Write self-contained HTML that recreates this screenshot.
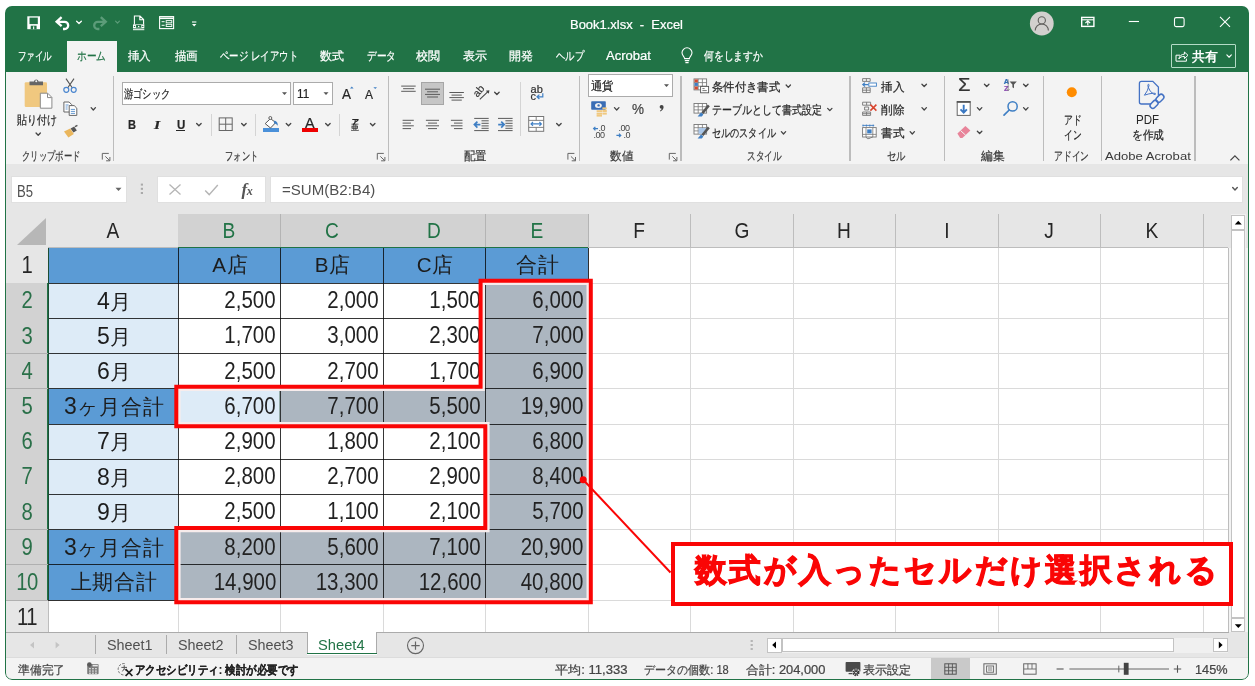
<!DOCTYPE html>
<html lang="ja">
<head>
<meta charset="utf-8">
<title>Book1.xlsx - Excel</title>
<style>
html,body{margin:0;padding:0;background:#fff}
body{width:1255px;height:686px;overflow:hidden;position:relative;font-family:"Liberation Sans",sans-serif}
#win{position:absolute;left:0;top:0;width:1255px;height:686px;clip-path:inset(6px 6px 6px 5px round 7px);background:#f3f3f3;will-change:transform}
#frame{position:absolute;left:5px;top:6px;width:1244px;height:674px;box-sizing:border-box;border:1px solid #217346;border-radius:7px;pointer-events:none}
.t{position:absolute;white-space:nowrap;margin:0;padding:0}
.r{position:absolute}
.ui .t{-webkit-text-stroke:0.22px currentColor}
svg.ov{position:absolute;left:0;top:0;width:1255px;height:686px;overflow:visible}
</style>
</head>
<body>
<div id="win">
<!-- chrome -->
<div class="ui">
<div class="r" style="left:5px;top:6px;width:1244px;height:66px;background:#217346;"></div>
<div class="r" style="left:67px;top:41px;width:50px;height:31px;background:#f3f3f3;"></div>
<div class="t" id="f1" style="top:19px;font-size:12.5px;line-height:12.5px;color:#fff;left:570px;transform:scaleX(1.036);transform-origin:0 0;">Book1.xlsx&nbsp; -&nbsp; Excel</div>
<div class="t" id="f2" style="top:50px;font-size:12px;line-height:12px;color:#fff;left:18px;transform:scaleX(0.7083);transform-origin:0 0;">ファイル</div>
<div class="t" id="f3" style="top:50px;font-size:12px;line-height:12px;color:#fff;left:128px;transform:scaleX(0.9583);transform-origin:0 0;">挿入</div>
<div class="t" id="f4" style="top:50px;font-size:12px;line-height:12px;color:#fff;left:175px;transform:scaleX(0.9583);transform-origin:0 0;">描画</div>
<div class="t" id="f5" style="top:50px;font-size:12px;line-height:12px;color:#fff;left:220px;transform:scaleX(0.7852);transform-origin:0 0;">ページ レイアウト</div>
<div class="t" id="f6" style="top:50px;font-size:12px;line-height:12px;color:#fff;left:320px;transform:scaleX(1.0);transform-origin:0 0;">数式</div>
<div class="t" id="f7" style="top:50px;font-size:12px;line-height:12px;color:#fff;left:367px;transform:scaleX(0.8056);transform-origin:0 0;">データ</div>
<div class="t" id="f8" style="top:50px;font-size:12px;line-height:12px;color:#fff;left:416px;transform:scaleX(1.0);transform-origin:0 0;">校閲</div>
<div class="t" id="f9" style="top:50px;font-size:12px;line-height:12px;color:#fff;left:463px;transform:scaleX(1.0);transform-origin:0 0;">表示</div>
<div class="t" id="f10" style="top:50px;font-size:12px;line-height:12px;color:#fff;left:509px;transform:scaleX(1.0);transform-origin:0 0;">開発</div>
<div class="t" id="f11" style="top:50px;font-size:12px;line-height:12px;color:#fff;left:556px;transform:scaleX(0.7778);transform-origin:0 0;">ヘルプ</div>
<div class="t" id="f12" style="top:50px;font-size:12px;line-height:12px;color:#fff;left:606px;transform:scaleX(1.088);transform-origin:0 0;">Acrobat</div>
<div class="t" id="f13" style="top:50px;font-size:12px;line-height:12px;color:#fff;left:704px;transform:scaleX(0.8194);transform-origin:0 0;">何をしますか</div>
<div class="t" id="f14" style="top:50px;font-size:12px;line-height:12px;color:#217346;left:77px;transform:scaleX(0.8056);transform-origin:0 0;">ホーム</div>
<div class="r" style="left:1171.2px;top:44.4px;width:64.6px;height:23.8px;border:1.2px solid #b4dbc6;box-sizing:border-box;border-radius:1px"></div>
<div class="t" id="f15" style="top:50.4px;font-size:13px;line-height:13px;color:#fff;left:1192px;transform:scaleX(0.9923);transform-origin:0 0;font-weight:bold;-webkit-text-stroke:0;">共有</div>
</div>
<!-- ribbon -->
<div class="ui">
<div class="r" style="left:5px;top:71.5px;width:1244px;height:92.5px;background:#f3f3f3;"></div>
<div class="r" style="left:5px;top:163.5px;width:1244px;height:1px;background:#d8d8d8;"></div>
<div class="r" style="left:112.9px;top:76px;width:1.2px;height:84.5px;background:#bcbcbc;"></div>
<div class="r" style="left:388.2px;top:76px;width:1.2px;height:84.5px;background:#bcbcbc;"></div>
<div class="r" style="left:578.6px;top:76px;width:1.2px;height:84.5px;background:#bcbcbc;"></div>
<div class="r" style="left:680.4px;top:76px;width:1.2px;height:84.5px;background:#bcbcbc;"></div>
<div class="r" style="left:849.4px;top:76px;width:1.2px;height:84.5px;background:#bcbcbc;"></div>
<div class="r" style="left:944.1px;top:76px;width:1.2px;height:84.5px;background:#bcbcbc;"></div>
<div class="r" style="left:1043.0px;top:76px;width:1.2px;height:84.5px;background:#bcbcbc;"></div>
<div class="r" style="left:1100.8000000000002px;top:76px;width:1.2px;height:84.5px;background:#bcbcbc;"></div>
<div class="r" style="left:1194.4px;top:76px;width:1.2px;height:84.5px;background:#bcbcbc;"></div>
<div class="r" style="left:210.7px;top:114px;width:1px;height:21.5px;background:#d4d4d4;"></div>
<div class="r" style="left:255.3px;top:114px;width:1px;height:21.5px;background:#d4d4d4;"></div>
<div class="r" style="left:339.3px;top:114px;width:1px;height:21.5px;background:#d4d4d4;"></div>
<div class="r" style="left:520.1px;top:81.5px;width:1px;height:54px;background:#d4d4d4;"></div>
<div class="t" id="f16" style="top:150.6px;font-size:11.5px;line-height:11.5px;color:#3a3a3a;left:21.5px;transform:scaleX(0.6929);transform-origin:0 0;">クリップボード</div>
<div class="t" id="f17" style="top:150.6px;font-size:11.5px;line-height:11.5px;color:#3a3a3a;left:225.4px;transform:scaleX(0.6875);transform-origin:0 0;">フォント</div>
<div class="t" id="f18" style="top:150.6px;font-size:11.5px;line-height:11.5px;color:#3a3a3a;left:463.7px;transform:scaleX(0.95);transform-origin:0 0;">配置</div>
<div class="t" id="f19" style="top:150.6px;font-size:11.5px;line-height:11.5px;color:#3a3a3a;left:609.8px;transform:scaleX(0.9667);transform-origin:0 0;">数値</div>
<div class="t" id="f20" style="top:150.6px;font-size:11.5px;line-height:11.5px;color:#3a3a3a;left:747px;transform:scaleX(0.7188);transform-origin:0 0;">スタイル</div>
<div class="t" id="f21" style="top:150.6px;font-size:11.5px;line-height:11.5px;color:#3a3a3a;left:886.7px;transform:scaleX(0.775);transform-origin:0 0;">セル</div>
<div class="t" id="f22" style="top:150.6px;font-size:11.5px;line-height:11.5px;color:#3a3a3a;left:981px;transform:scaleX(0.9792);transform-origin:0 0;">編集</div>
<div class="t" id="f23" style="top:150.6px;font-size:11.5px;line-height:11.5px;color:#3a3a3a;left:1054px;transform:scaleX(0.7292);transform-origin:0 0;">アドイン</div>
<div class="t" id="f24" style="top:150.6px;font-size:11.5px;line-height:11.5px;color:#3a3a3a;left:1104.7px;transform:scaleX(1.1371);transform-origin:0 0;-webkit-text-stroke:0;">Adobe Acrobat</div>
<div class="t" id="f25" style="top:113.5px;font-size:12px;line-height:12px;color:#262626;left:16.7px;transform:scaleX(0.8333);transform-origin:0 0;">貼り付け</div>
<div class="r" style="left:122px;top:82.3px;width:169.2px;height:22.8px;background:#fff;box-sizing:border-box;border:1px solid #ababab;"></div>
<div class="r" style="left:293.3px;top:82.3px;width:39.8px;height:22.8px;background:#fff;box-sizing:border-box;border:1px solid #ababab;"></div>
<div class="t" id="f26" style="top:88px;font-size:12px;line-height:12px;color:#262626;left:124.3px;transform:scaleX(0.77);transform-origin:0 0;">游ゴシック</div>
<div class="t" id="f27" style="top:88px;font-size:12.5px;line-height:12.5px;color:#262626;left:296.5px;transform:scaleX(0.9396);transform-origin:0 0;">11</div>
<div class="t" id="f28" style="top:118px;font-size:13.5px;line-height:13.5px;color:#262626;left:128.3px;transform:scaleX(0.8205);transform-origin:0 0;font-weight:bold;">B</div>
<div class="t" id="f29" style="top:118px;font-size:13.5px;line-height:13.5px;color:#262626;left:153.8px;transform:scaleX(1.1774);transform-origin:0 0;font-weight:bold;font-style:italic;font-family:'Liberation Serif',serif;">I</div>
<div class="t" id="f30" style="top:118px;font-size:13.5px;line-height:13.5px;color:#262626;left:176.6px;transform:scaleX(0.8513);transform-origin:0 0;font-weight:bold;">U</div>
<div class="r" style="left:176.4px;top:130px;width:8.8px;height:1.1px;background:#262626;"></div>
<div class="t" id="f31" style="top:86px;font-size:15px;line-height:15px;color:#262626;left:342px;transform:scaleX(0.8986);transform-origin:0 0;">A</div>
<div class="t" id="f32" style="top:87.5px;font-size:13px;line-height:13px;color:#262626;left:365.3px;transform:scaleX(0.9225);transform-origin:0 0;">A</div>
<div class="t" id="f33" style="top:115.5px;font-size:14.5px;line-height:14.5px;color:#262626;left:305px;transform:scaleX(0.9926);transform-origin:0 0;">A</div>
<div class="r" style="left:302.1px;top:128.3px;width:15.9px;height:4.2px;background:#ee0000;"></div>
<div class="r" style="left:263.1px;top:128.3px;width:15.9px;height:4px;background:#4a90d9;"></div>
<div class="t" style="top:117.5px;font-size:7px;line-height:7px;color:#262626;left:351.5px;font-weight:bold;">ア</div>
<div class="t" style="top:124px;font-size:8px;line-height:8px;color:#262626;left:350.8px;">亜</div>
<div class="r" style="left:421.1px;top:82px;width:22.9px;height:23px;background:#c6c6c6;box-sizing:border-box;border:1px solid #a6a6a6;"></div>
<div class="t" style="top:84.4px;font-size:11px;line-height:11px;color:#333;left:530.4px;letter-spacing:0.2px;">ab</div>
<div class="t" style="top:91.4px;font-size:11px;line-height:11px;color:#333;left:530.6px;">c</div>
<div class="r" style="left:588px;top:74.4px;width:85.3px;height:22.4px;background:#fff;box-sizing:border-box;border:1px solid #ababab;"></div>
<div class="t" id="f34" style="top:80px;font-size:12px;line-height:12px;color:#262626;left:590.7px;transform:scaleX(0.9417);transform-origin:0 0;">通貨</div>
<div class="t" id="f35" style="top:101.5px;font-size:14.5px;line-height:14.5px;color:#444;left:632px;transform:scaleX(0.9298);transform-origin:0 0;">%</div>
<div class="t" style="top:124.1px;font-size:9px;line-height:9px;color:#444;left:598.6px;letter-spacing:-0.5px;-webkit-text-stroke:0;">.0</div>
<div class="t" style="top:131.4px;font-size:9px;line-height:9px;color:#444;left:593.6px;letter-spacing:-0.5px;-webkit-text-stroke:0;">.00</div>
<div class="t" style="top:124.1px;font-size:9px;line-height:9px;color:#444;left:618.4px;letter-spacing:-0.5px;-webkit-text-stroke:0;">.00</div>
<div class="t" style="top:131.4px;font-size:9px;line-height:9px;color:#444;left:623.4px;letter-spacing:-0.5px;-webkit-text-stroke:0;">.0</div>
<div class="t" id="f36" style="top:80.5px;font-size:12px;line-height:12px;color:#262626;left:711.8px;transform:scaleX(0.9472);transform-origin:0 0;">条件付き書式</div>
<div class="t" id="f37" style="top:103.8px;font-size:12px;line-height:12px;color:#262626;left:711.8px;transform:scaleX(0.8303);transform-origin:0 0;">テーブルとして書式設定</div>
<div class="t" id="f38" style="top:127px;font-size:12px;line-height:12px;color:#262626;left:711.8px;transform:scaleX(0.7595);transform-origin:0 0;">セルのスタイル</div>
<div class="t" id="f39" style="top:80.5px;font-size:12px;line-height:12px;color:#262626;left:881px;transform:scaleX(0.9667);transform-origin:0 0;">挿入</div>
<div class="t" id="f40" style="top:103.8px;font-size:12px;line-height:12px;color:#262626;left:881px;transform:scaleX(0.9667);transform-origin:0 0;">削除</div>
<div class="t" id="f41" style="top:127px;font-size:12px;line-height:12px;color:#262626;left:881px;transform:scaleX(0.9667);transform-origin:0 0;">書式</div>
<div class="t" id="f42" style="top:76px;font-size:18px;line-height:18px;color:#333;left:957.5px;transform:scaleX(1.122);transform-origin:0 0;">Σ</div>
<div class="t" style="top:78px;font-size:7.5px;line-height:7.5px;color:#2f6fb6;left:1003.7px;font-weight:bold;">A</div>
<div class="t" style="top:84.6px;font-size:7.5px;line-height:7.5px;color:#8a4bb0;left:1003.9px;font-weight:bold;">Z</div>
<div class="t" id="f43" style="top:113.8px;font-size:12px;line-height:12px;color:#262626;left:1064.3px;transform:scaleX(0.7292);transform-origin:0 0;">アド</div>
<div class="t" id="f44" style="top:128.8px;font-size:12px;line-height:12px;color:#262626;left:1064.3px;transform:scaleX(0.7292);transform-origin:0 0;">イン</div>
<div class="t" id="f45" style="top:113.5px;font-size:12px;line-height:12px;color:#262626;left:1136.3px;transform:scaleX(0.9625);transform-origin:0 0;-webkit-text-stroke:0;">PDF</div>
<div class="t" id="f46" style="top:128.8px;font-size:12px;line-height:12px;color:#262626;left:1132px;transform:scaleX(0.8944);transform-origin:0 0;">を作成</div>
</div>
<!-- formula -->
<div class="sheet">
<div class="r" style="left:5px;top:164px;width:1244px;height:84px;background:#e6e6e6;"></div>
<div class="r" style="left:11px;top:176px;width:116px;height:27px;background:#fff;box-sizing:border-box;border:1px solid #e0e0e0;"></div>
<div class="t" id="f47" style="top:183.6px;font-size:16px;line-height:16px;color:#505050;left:17.2px;transform:scaleX(0.8172);transform-origin:0 0;">B5</div>
<div class="r" style="left:157.4px;top:176px;width:108.6px;height:27px;background:#fff;box-sizing:border-box;border:1px solid #e0e0e0;"></div>
<div class="r" style="left:269.7px;top:176px;width:973.3px;height:27px;background:#fff;box-sizing:border-box;border:1px solid #e0e0e0;"></div>
<div class="t" id="f48" style="top:182.2px;font-size:15px;line-height:15px;color:#505050;left:281.7px;transform:scaleX(1.0037);transform-origin:0 0;">=SUM(B2:B4)</div>
<div class="t" style="top:180.5px;font-size:17px;line-height:17px;color:#555;left:241.5px;font-family:'Liberation Serif',serif;font-style:italic;font-weight:bold;">f<span style="font-size:12px;margin-left:-0.5px">x</span></div>
</div>
<!-- grid -->
<div class="sheet">
<div class="r" style="left:5px;top:213px;width:1244px;height:35px;background:#e6e6e6;"></div>
<div class="r" style="left:5px;top:248px;width:43px;height:384px;background:#e6e6e6;"></div>
<div class="r" style="left:48px;top:248px;width:1180px;height:384px;background:#fff;"></div>
<div class="r" style="left:177.5px;top:214px;width:1px;height:34px;background:#bdbdbd;"></div>
<div class="t" style="top:219.5px;font-size:22px;line-height:22px;color:#262626;left:113.0px;transform:translateX(-50%);transform:translateX(-50%) scaleX(.87);">A</div>
<div class="r" style="left:178px;top:214px;width:102.5px;height:34px;background:#d2d2d2;"></div>
<div class="r" style="left:178px;top:246.5px;width:102.5px;height:1.5px;background:#217346;"></div>
<div class="r" style="left:280.0px;top:214px;width:1px;height:34px;background:#b4b4b4;"></div>
<div class="t" style="top:219.5px;font-size:22px;line-height:22px;color:#217346;left:229.25px;transform:translateX(-50%);transform:translateX(-50%) scaleX(.87);">B</div>
<div class="r" style="left:280.5px;top:214px;width:102.5px;height:34px;background:#d2d2d2;"></div>
<div class="r" style="left:280.5px;top:246.5px;width:102.5px;height:1.5px;background:#217346;"></div>
<div class="r" style="left:382.5px;top:214px;width:1px;height:34px;background:#b4b4b4;"></div>
<div class="t" style="top:219.5px;font-size:22px;line-height:22px;color:#217346;left:331.75px;transform:translateX(-50%);transform:translateX(-50%) scaleX(.87);">C</div>
<div class="r" style="left:383px;top:214px;width:102.5px;height:34px;background:#d2d2d2;"></div>
<div class="r" style="left:383px;top:246.5px;width:102.5px;height:1.5px;background:#217346;"></div>
<div class="r" style="left:485.0px;top:214px;width:1px;height:34px;background:#b4b4b4;"></div>
<div class="t" style="top:219.5px;font-size:22px;line-height:22px;color:#217346;left:434.25px;transform:translateX(-50%);transform:translateX(-50%) scaleX(.87);">D</div>
<div class="r" style="left:485.5px;top:214px;width:102.5px;height:34px;background:#d2d2d2;"></div>
<div class="r" style="left:485.5px;top:246.5px;width:102.5px;height:1.5px;background:#217346;"></div>
<div class="r" style="left:587.5px;top:214px;width:1px;height:34px;background:#b4b4b4;"></div>
<div class="t" style="top:219.5px;font-size:22px;line-height:22px;color:#217346;left:536.75px;transform:translateX(-50%);transform:translateX(-50%) scaleX(.87);">E</div>
<div class="r" style="left:690.0px;top:214px;width:1px;height:34px;background:#bdbdbd;"></div>
<div class="t" style="top:219.5px;font-size:22px;line-height:22px;color:#262626;left:639.25px;transform:translateX(-50%);transform:translateX(-50%) scaleX(.87);">F</div>
<div class="r" style="left:792.5px;top:214px;width:1px;height:34px;background:#bdbdbd;"></div>
<div class="t" style="top:219.5px;font-size:22px;line-height:22px;color:#262626;left:741.75px;transform:translateX(-50%);transform:translateX(-50%) scaleX(.87);">G</div>
<div class="r" style="left:895.0px;top:214px;width:1px;height:34px;background:#bdbdbd;"></div>
<div class="t" style="top:219.5px;font-size:22px;line-height:22px;color:#262626;left:844.25px;transform:translateX(-50%);transform:translateX(-50%) scaleX(.87);">H</div>
<div class="r" style="left:997.5px;top:214px;width:1px;height:34px;background:#bdbdbd;"></div>
<div class="t" style="top:219.5px;font-size:22px;line-height:22px;color:#262626;left:946.75px;transform:translateX(-50%);transform:translateX(-50%) scaleX(.87);">I</div>
<div class="r" style="left:1100.0px;top:214px;width:1px;height:34px;background:#bdbdbd;"></div>
<div class="t" style="top:219.5px;font-size:22px;line-height:22px;color:#262626;left:1049.25px;transform:translateX(-50%);transform:translateX(-50%) scaleX(.87);">J</div>
<div class="r" style="left:1202.5px;top:214px;width:1px;height:34px;background:#bdbdbd;"></div>
<div class="t" style="top:219.5px;font-size:22px;line-height:22px;color:#262626;left:1151.75px;transform:translateX(-50%);transform:translateX(-50%) scaleX(.87);">K</div>
<div class="r" style="left:48px;top:247px;width:1180px;height:1px;background:#bdbdbd;"></div>
<div class="r" style="left:178px;top:246.5px;width:102.5px;height:1.5px;background:#217346;"></div>
<div class="r" style="left:280.5px;top:246.5px;width:102.5px;height:1.5px;background:#217346;"></div>
<div class="r" style="left:383px;top:246.5px;width:102.5px;height:1.5px;background:#217346;"></div>
<div class="r" style="left:485.5px;top:246.5px;width:102.5px;height:1.5px;background:#217346;"></div>
<div class="r" style="left:6px;top:283px;width:42px;height:1px;background:#bdbdbd;"></div>
<div class="t" style="top:254.2px;font-size:23px;line-height:23px;color:#262626;left:27.2px;transform:translateX(-50%);letter-spacing:-0.5px;transform:translateX(-50%) scaleX(.88);">1</div>
<div class="r" style="left:6px;top:283.2px;width:42px;height:35.19999999999999px;background:#d2d2d2;"></div>
<div class="r" style="left:46.5px;top:283.2px;width:1.5px;height:35.19999999999999px;background:#217346;"></div>
<div class="r" style="left:6px;top:318px;width:42px;height:1px;background:#b0b0b0;"></div>
<div class="t" style="top:289.4px;font-size:23px;line-height:23px;color:#2a7049;left:27.2px;transform:translateX(-50%);letter-spacing:-0.5px;transform:translateX(-50%) scaleX(.88);">2</div>
<div class="r" style="left:6px;top:318.4px;width:42px;height:35.200000000000045px;background:#d2d2d2;"></div>
<div class="r" style="left:46.5px;top:318.4px;width:1.5px;height:35.200000000000045px;background:#217346;"></div>
<div class="r" style="left:6px;top:353px;width:42px;height:1px;background:#b0b0b0;"></div>
<div class="t" style="top:324.6px;font-size:23px;line-height:23px;color:#2a7049;left:27.2px;transform:translateX(-50%);letter-spacing:-0.5px;transform:translateX(-50%) scaleX(.88);">3</div>
<div class="r" style="left:6px;top:353.6px;width:42px;height:35.19999999999999px;background:#d2d2d2;"></div>
<div class="r" style="left:46.5px;top:353.6px;width:1.5px;height:35.19999999999999px;background:#217346;"></div>
<div class="r" style="left:6px;top:388px;width:42px;height:1px;background:#b0b0b0;"></div>
<div class="t" style="top:359.8px;font-size:23px;line-height:23px;color:#2a7049;left:27.2px;transform:translateX(-50%);letter-spacing:-0.5px;transform:translateX(-50%) scaleX(.88);">4</div>
<div class="r" style="left:6px;top:388.8px;width:42px;height:35.19999999999999px;background:#d2d2d2;"></div>
<div class="r" style="left:46.5px;top:388.8px;width:1.5px;height:35.19999999999999px;background:#217346;"></div>
<div class="r" style="left:6px;top:424px;width:42px;height:1px;background:#b0b0b0;"></div>
<div class="t" style="top:395.0px;font-size:23px;line-height:23px;color:#2a7049;left:27.2px;transform:translateX(-50%);letter-spacing:-0.5px;transform:translateX(-50%) scaleX(.88);">5</div>
<div class="r" style="left:6px;top:424.0px;width:42px;height:35.19999999999999px;background:#d2d2d2;"></div>
<div class="r" style="left:46.5px;top:424.0px;width:1.5px;height:35.19999999999999px;background:#217346;"></div>
<div class="r" style="left:6px;top:459px;width:42px;height:1px;background:#b0b0b0;"></div>
<div class="t" style="top:430.2px;font-size:23px;line-height:23px;color:#2a7049;left:27.2px;transform:translateX(-50%);letter-spacing:-0.5px;transform:translateX(-50%) scaleX(.88);">6</div>
<div class="r" style="left:6px;top:459.2px;width:42px;height:35.19999999999999px;background:#d2d2d2;"></div>
<div class="r" style="left:46.5px;top:459.2px;width:1.5px;height:35.19999999999999px;background:#217346;"></div>
<div class="r" style="left:6px;top:494px;width:42px;height:1px;background:#b0b0b0;"></div>
<div class="t" style="top:465.4px;font-size:23px;line-height:23px;color:#2a7049;left:27.2px;transform:translateX(-50%);letter-spacing:-0.5px;transform:translateX(-50%) scaleX(.88);">7</div>
<div class="r" style="left:6px;top:494.4px;width:42px;height:35.200000000000045px;background:#d2d2d2;"></div>
<div class="r" style="left:46.5px;top:494.4px;width:1.5px;height:35.200000000000045px;background:#217346;"></div>
<div class="r" style="left:6px;top:529px;width:42px;height:1px;background:#b0b0b0;"></div>
<div class="t" style="top:500.6px;font-size:23px;line-height:23px;color:#2a7049;left:27.2px;transform:translateX(-50%);letter-spacing:-0.5px;transform:translateX(-50%) scaleX(.88);">8</div>
<div class="r" style="left:6px;top:529.6px;width:42px;height:35.19999999999993px;background:#d2d2d2;"></div>
<div class="r" style="left:46.5px;top:529.6px;width:1.5px;height:35.19999999999993px;background:#217346;"></div>
<div class="r" style="left:6px;top:564px;width:42px;height:1px;background:#b0b0b0;"></div>
<div class="t" style="top:535.8px;font-size:23px;line-height:23px;color:#2a7049;left:27.2px;transform:translateX(-50%);letter-spacing:-0.5px;transform:translateX(-50%) scaleX(.88);">9</div>
<div class="r" style="left:6px;top:564.8px;width:42px;height:35.200000000000045px;background:#d2d2d2;"></div>
<div class="r" style="left:46.5px;top:564.8px;width:1.5px;height:35.200000000000045px;background:#217346;"></div>
<div class="r" style="left:6px;top:600px;width:42px;height:1px;background:#b0b0b0;"></div>
<div class="t" style="top:571.0px;font-size:23px;line-height:23px;color:#2a7049;left:27.2px;transform:translateX(-50%);letter-spacing:-0.5px;transform:translateX(-50%) scaleX(.88);">10</div>
<div class="r" style="left:6px;top:632px;width:42px;height:1px;background:#bdbdbd;"></div>
<div class="t" style="top:606.2px;font-size:23px;line-height:23px;color:#262626;left:27.2px;transform:translateX(-50%);letter-spacing:-0.5px;transform:translateX(-50%) scaleX(.88);">11</div>
<div class="r" style="left:47.5px;top:248px;width:1px;height:35px;background:#bdbdbd;"></div>
<div class="r" style="left:47.5px;top:600.0px;width:1px;height:32px;background:#bdbdbd;"></div>
<div class="r" style="left:48px;top:282.7px;width:1180px;height:1px;background:#dadada;"></div>
<div class="r" style="left:48px;top:317.9px;width:1180px;height:1px;background:#dadada;"></div>
<div class="r" style="left:48px;top:353.1px;width:1180px;height:1px;background:#dadada;"></div>
<div class="r" style="left:48px;top:388.3px;width:1180px;height:1px;background:#dadada;"></div>
<div class="r" style="left:48px;top:423.5px;width:1180px;height:1px;background:#dadada;"></div>
<div class="r" style="left:48px;top:458.7px;width:1180px;height:1px;background:#dadada;"></div>
<div class="r" style="left:48px;top:493.9px;width:1180px;height:1px;background:#dadada;"></div>
<div class="r" style="left:48px;top:529.1px;width:1180px;height:1px;background:#dadada;"></div>
<div class="r" style="left:48px;top:564.3px;width:1180px;height:1px;background:#dadada;"></div>
<div class="r" style="left:48px;top:599.5px;width:1180px;height:1px;background:#dadada;"></div>
<div class="r" style="left:177.5px;top:248px;width:1px;height:384px;background:#dadada;"></div>
<div class="r" style="left:280.0px;top:248px;width:1px;height:384px;background:#dadada;"></div>
<div class="r" style="left:382.5px;top:248px;width:1px;height:384px;background:#dadada;"></div>
<div class="r" style="left:485.0px;top:248px;width:1px;height:384px;background:#dadada;"></div>
<div class="r" style="left:587.5px;top:248px;width:1px;height:384px;background:#dadada;"></div>
<div class="r" style="left:690.0px;top:248px;width:1px;height:384px;background:#dadada;"></div>
<div class="r" style="left:792.5px;top:248px;width:1px;height:384px;background:#dadada;"></div>
<div class="r" style="left:895.0px;top:248px;width:1px;height:384px;background:#dadada;"></div>
<div class="r" style="left:997.5px;top:248px;width:1px;height:384px;background:#dadada;"></div>
<div class="r" style="left:1100.0px;top:248px;width:1px;height:384px;background:#dadada;"></div>
<div class="r" style="left:1202.5px;top:248px;width:1px;height:384px;background:#dadada;"></div>
<div class="r" style="left:1227.5px;top:248px;width:1px;height:384px;background:#bdbdbd;"></div>
<div class="r" style="left:48px;top:248.0px;width:130px;height:35.2px;background:#5b9bd5;"></div>
<div class="r" style="left:178px;top:248.0px;width:102.5px;height:35.2px;background:#5b9bd5;"></div>
<div class="r" style="left:280.5px;top:248.0px;width:102.5px;height:35.2px;background:#5b9bd5;"></div>
<div class="r" style="left:383px;top:248.0px;width:102.5px;height:35.2px;background:#5b9bd5;"></div>
<div class="r" style="left:485.5px;top:248.0px;width:102.5px;height:35.2px;background:#5b9bd5;"></div>
<div class="r" style="left:48px;top:283.2px;width:130px;height:35.2px;background:#ddebf7;"></div>
<div class="r" style="left:178px;top:283.2px;width:102.5px;height:35.2px;background:#fff;"></div>
<div class="r" style="left:280.5px;top:283.2px;width:102.5px;height:35.2px;background:#fff;"></div>
<div class="r" style="left:383px;top:283.2px;width:102.5px;height:35.2px;background:#fff;"></div>
<div class="r" style="left:485.5px;top:283.2px;width:102.5px;height:35.2px;background:#acb6c0;"></div>
<div class="r" style="left:48px;top:318.4px;width:130px;height:35.2px;background:#ddebf7;"></div>
<div class="r" style="left:178px;top:318.4px;width:102.5px;height:35.2px;background:#fff;"></div>
<div class="r" style="left:280.5px;top:318.4px;width:102.5px;height:35.2px;background:#fff;"></div>
<div class="r" style="left:383px;top:318.4px;width:102.5px;height:35.2px;background:#fff;"></div>
<div class="r" style="left:485.5px;top:318.4px;width:102.5px;height:35.2px;background:#acb6c0;"></div>
<div class="r" style="left:48px;top:353.6px;width:130px;height:35.2px;background:#ddebf7;"></div>
<div class="r" style="left:178px;top:353.6px;width:102.5px;height:35.2px;background:#fff;"></div>
<div class="r" style="left:280.5px;top:353.6px;width:102.5px;height:35.2px;background:#fff;"></div>
<div class="r" style="left:383px;top:353.6px;width:102.5px;height:35.2px;background:#fff;"></div>
<div class="r" style="left:485.5px;top:353.6px;width:102.5px;height:35.2px;background:#acb6c0;"></div>
<div class="r" style="left:48px;top:388.8px;width:130px;height:35.2px;background:#5b9bd5;"></div>
<div class="r" style="left:178px;top:388.8px;width:102.5px;height:35.2px;background:#ddebf7;"></div>
<div class="r" style="left:280.5px;top:388.8px;width:102.5px;height:35.2px;background:#acb6c0;"></div>
<div class="r" style="left:383px;top:388.8px;width:102.5px;height:35.2px;background:#acb6c0;"></div>
<div class="r" style="left:485.5px;top:388.8px;width:102.5px;height:35.2px;background:#acb6c0;"></div>
<div class="r" style="left:48px;top:424.0px;width:130px;height:35.2px;background:#ddebf7;"></div>
<div class="r" style="left:178px;top:424.0px;width:102.5px;height:35.2px;background:#fff;"></div>
<div class="r" style="left:280.5px;top:424.0px;width:102.5px;height:35.2px;background:#fff;"></div>
<div class="r" style="left:383px;top:424.0px;width:102.5px;height:35.2px;background:#fff;"></div>
<div class="r" style="left:485.5px;top:424.0px;width:102.5px;height:35.2px;background:#acb6c0;"></div>
<div class="r" style="left:48px;top:459.2px;width:130px;height:35.2px;background:#ddebf7;"></div>
<div class="r" style="left:178px;top:459.2px;width:102.5px;height:35.2px;background:#fff;"></div>
<div class="r" style="left:280.5px;top:459.2px;width:102.5px;height:35.2px;background:#fff;"></div>
<div class="r" style="left:383px;top:459.2px;width:102.5px;height:35.2px;background:#fff;"></div>
<div class="r" style="left:485.5px;top:459.2px;width:102.5px;height:35.2px;background:#acb6c0;"></div>
<div class="r" style="left:48px;top:494.4px;width:130px;height:35.2px;background:#ddebf7;"></div>
<div class="r" style="left:178px;top:494.4px;width:102.5px;height:35.2px;background:#fff;"></div>
<div class="r" style="left:280.5px;top:494.4px;width:102.5px;height:35.2px;background:#fff;"></div>
<div class="r" style="left:383px;top:494.4px;width:102.5px;height:35.2px;background:#fff;"></div>
<div class="r" style="left:485.5px;top:494.4px;width:102.5px;height:35.2px;background:#acb6c0;"></div>
<div class="r" style="left:48px;top:529.6px;width:130px;height:35.2px;background:#5b9bd5;"></div>
<div class="r" style="left:178px;top:529.6px;width:102.5px;height:35.2px;background:#acb6c0;"></div>
<div class="r" style="left:280.5px;top:529.6px;width:102.5px;height:35.2px;background:#acb6c0;"></div>
<div class="r" style="left:383px;top:529.6px;width:102.5px;height:35.2px;background:#acb6c0;"></div>
<div class="r" style="left:485.5px;top:529.6px;width:102.5px;height:35.2px;background:#acb6c0;"></div>
<div class="r" style="left:48px;top:564.8px;width:130px;height:35.2px;background:#5b9bd5;"></div>
<div class="r" style="left:178px;top:564.8px;width:102.5px;height:35.2px;background:#acb6c0;"></div>
<div class="r" style="left:280.5px;top:564.8px;width:102.5px;height:35.2px;background:#acb6c0;"></div>
<div class="r" style="left:383px;top:564.8px;width:102.5px;height:35.2px;background:#acb6c0;"></div>
<div class="r" style="left:485.5px;top:564.8px;width:102.5px;height:35.2px;background:#acb6c0;"></div>
<div class="r" style="left:48px;top:282.7px;width:540.5px;height:1px;background:rgba(10,10,10,.82);"></div>
<div class="r" style="left:48px;top:317.9px;width:540.5px;height:1px;background:rgba(10,10,10,.82);"></div>
<div class="r" style="left:48px;top:353.1px;width:540.5px;height:1px;background:rgba(10,10,10,.82);"></div>
<div class="r" style="left:48px;top:388.3px;width:540.5px;height:1px;background:rgba(10,10,10,.82);"></div>
<div class="r" style="left:48px;top:423.5px;width:540.5px;height:1px;background:rgba(10,10,10,.82);"></div>
<div class="r" style="left:48px;top:458.7px;width:540.5px;height:1px;background:rgba(10,10,10,.82);"></div>
<div class="r" style="left:48px;top:493.9px;width:540.5px;height:1px;background:rgba(10,10,10,.82);"></div>
<div class="r" style="left:48px;top:529.1px;width:540.5px;height:1px;background:rgba(10,10,10,.82);"></div>
<div class="r" style="left:48px;top:564.3px;width:540.5px;height:1px;background:rgba(10,10,10,.82);"></div>
<div class="r" style="left:48px;top:599.5px;width:540.5px;height:1px;background:rgba(10,10,10,.82);"></div>
<div class="r" style="left:177.5px;top:248px;width:1px;height:352.0px;background:rgba(10,10,10,.82);"></div>
<div class="r" style="left:280.0px;top:248px;width:1px;height:352.0px;background:rgba(10,10,10,.82);"></div>
<div class="r" style="left:382.5px;top:248px;width:1px;height:352.0px;background:rgba(10,10,10,.82);"></div>
<div class="r" style="left:485.0px;top:248px;width:1px;height:352.0px;background:rgba(10,10,10,.82);"></div>
<div class="r" style="left:587.5px;top:248px;width:1px;height:352.0px;background:rgba(10,10,10,.82);"></div>
<div class="r" style="left:47.5px;top:248px;width:1px;height:352.0px;background:#1d4d33;"></div>
<div class="r" style="left:179.2px;top:390px;width:100.4px;height:33.4px;box-sizing:border-box;border:1px solid rgba(90,120,105,.55)"></div>
<div class="t" style="top:255.4px;font-size:20.6px;line-height:20.6px;color:#1c1c1c;left:230.45px;transform:translateX(-50%);letter-spacing:0.7px;">A店</div>
<div class="t" style="top:255.4px;font-size:20.6px;line-height:20.6px;color:#1c1c1c;left:332.95px;transform:translateX(-50%);letter-spacing:0.7px;">B店</div>
<div class="t" style="top:255.4px;font-size:20.6px;line-height:20.6px;color:#1c1c1c;left:435.45px;transform:translateX(-50%);letter-spacing:0.7px;">C店</div>
<div class="t" style="top:255.4px;font-size:20.6px;line-height:20.6px;color:#1c1c1c;left:537.95px;transform:translateX(-50%);letter-spacing:0.7px;">合計</div>
<div class="t" style="top:290.6px;font-size:20.6px;line-height:20.6px;color:#1c1c1c;left:114.2px;transform:translateX(-50%);letter-spacing:0.7px;"><span style="font-size:23px;letter-spacing:-0.6px;margin-right:0.6px">4</span>月</div>
<div class="t" style="top:289.2px;font-size:23px;line-height:23px;color:#222;right:979.1px;transform:scaleX(.89);transform-origin:100% 0;">2,500</div>
<div class="t" style="top:289.2px;font-size:23px;line-height:23px;color:#222;right:876.6px;transform:scaleX(.89);transform-origin:100% 0;">2,000</div>
<div class="t" style="top:289.2px;font-size:23px;line-height:23px;color:#222;right:774.1px;transform:scaleX(.89);transform-origin:100% 0;">1,500</div>
<div class="t" style="top:289.2px;font-size:23px;line-height:23px;color:#222;right:671.6px;transform:scaleX(.89);transform-origin:100% 0;">6,000</div>
<div class="t" style="top:325.8px;font-size:20.6px;line-height:20.6px;color:#1c1c1c;left:114.2px;transform:translateX(-50%);letter-spacing:0.7px;"><span style="font-size:23px;letter-spacing:-0.6px;margin-right:0.6px">5</span>月</div>
<div class="t" style="top:324.4px;font-size:23px;line-height:23px;color:#222;right:979.1px;transform:scaleX(.89);transform-origin:100% 0;">1,700</div>
<div class="t" style="top:324.4px;font-size:23px;line-height:23px;color:#222;right:876.6px;transform:scaleX(.89);transform-origin:100% 0;">3,000</div>
<div class="t" style="top:324.4px;font-size:23px;line-height:23px;color:#222;right:774.1px;transform:scaleX(.89);transform-origin:100% 0;">2,300</div>
<div class="t" style="top:324.4px;font-size:23px;line-height:23px;color:#222;right:671.6px;transform:scaleX(.89);transform-origin:100% 0;">7,000</div>
<div class="t" style="top:361.0px;font-size:20.6px;line-height:20.6px;color:#1c1c1c;left:114.2px;transform:translateX(-50%);letter-spacing:0.7px;"><span style="font-size:23px;letter-spacing:-0.6px;margin-right:0.6px">6</span>月</div>
<div class="t" style="top:359.6px;font-size:23px;line-height:23px;color:#222;right:979.1px;transform:scaleX(.89);transform-origin:100% 0;">2,500</div>
<div class="t" style="top:359.6px;font-size:23px;line-height:23px;color:#222;right:876.6px;transform:scaleX(.89);transform-origin:100% 0;">2,700</div>
<div class="t" style="top:359.6px;font-size:23px;line-height:23px;color:#222;right:774.1px;transform:scaleX(.89);transform-origin:100% 0;">1,700</div>
<div class="t" style="top:359.6px;font-size:23px;line-height:23px;color:#222;right:671.6px;transform:scaleX(.89);transform-origin:100% 0;">6,900</div>
<div class="t" style="top:396.2px;font-size:20.6px;line-height:20.6px;color:#1c1c1c;left:114.2px;transform:translateX(-50%);letter-spacing:0.7px;"><span style="font-size:23px;letter-spacing:-0.6px;margin-right:0.6px">3</span>ヶ月合計</div>
<div class="t" style="top:394.8px;font-size:23px;line-height:23px;color:#222;right:979.1px;transform:scaleX(.89);transform-origin:100% 0;">6,700</div>
<div class="t" style="top:394.8px;font-size:23px;line-height:23px;color:#222;right:876.6px;transform:scaleX(.89);transform-origin:100% 0;">7,700</div>
<div class="t" style="top:394.8px;font-size:23px;line-height:23px;color:#222;right:774.1px;transform:scaleX(.89);transform-origin:100% 0;">5,500</div>
<div class="t" style="top:394.8px;font-size:23px;line-height:23px;color:#222;right:671.6px;transform:scaleX(.89);transform-origin:100% 0;">19,900</div>
<div class="t" style="top:431.4px;font-size:20.6px;line-height:20.6px;color:#1c1c1c;left:114.2px;transform:translateX(-50%);letter-spacing:0.7px;"><span style="font-size:23px;letter-spacing:-0.6px;margin-right:0.6px">7</span>月</div>
<div class="t" style="top:430.0px;font-size:23px;line-height:23px;color:#222;right:979.1px;transform:scaleX(.89);transform-origin:100% 0;">2,900</div>
<div class="t" style="top:430.0px;font-size:23px;line-height:23px;color:#222;right:876.6px;transform:scaleX(.89);transform-origin:100% 0;">1,800</div>
<div class="t" style="top:430.0px;font-size:23px;line-height:23px;color:#222;right:774.1px;transform:scaleX(.89);transform-origin:100% 0;">2,100</div>
<div class="t" style="top:430.0px;font-size:23px;line-height:23px;color:#222;right:671.6px;transform:scaleX(.89);transform-origin:100% 0;">6,800</div>
<div class="t" style="top:466.6px;font-size:20.6px;line-height:20.6px;color:#1c1c1c;left:114.2px;transform:translateX(-50%);letter-spacing:0.7px;"><span style="font-size:23px;letter-spacing:-0.6px;margin-right:0.6px">8</span>月</div>
<div class="t" style="top:465.2px;font-size:23px;line-height:23px;color:#222;right:979.1px;transform:scaleX(.89);transform-origin:100% 0;">2,800</div>
<div class="t" style="top:465.2px;font-size:23px;line-height:23px;color:#222;right:876.6px;transform:scaleX(.89);transform-origin:100% 0;">2,700</div>
<div class="t" style="top:465.2px;font-size:23px;line-height:23px;color:#222;right:774.1px;transform:scaleX(.89);transform-origin:100% 0;">2,900</div>
<div class="t" style="top:465.2px;font-size:23px;line-height:23px;color:#222;right:671.6px;transform:scaleX(.89);transform-origin:100% 0;">8,400</div>
<div class="t" style="top:501.8px;font-size:20.6px;line-height:20.6px;color:#1c1c1c;left:114.2px;transform:translateX(-50%);letter-spacing:0.7px;"><span style="font-size:23px;letter-spacing:-0.6px;margin-right:0.6px">9</span>月</div>
<div class="t" style="top:500.4px;font-size:23px;line-height:23px;color:#222;right:979.1px;transform:scaleX(.89);transform-origin:100% 0;">2,500</div>
<div class="t" style="top:500.4px;font-size:23px;line-height:23px;color:#222;right:876.6px;transform:scaleX(.89);transform-origin:100% 0;">1,100</div>
<div class="t" style="top:500.4px;font-size:23px;line-height:23px;color:#222;right:774.1px;transform:scaleX(.89);transform-origin:100% 0;">2,100</div>
<div class="t" style="top:500.4px;font-size:23px;line-height:23px;color:#222;right:671.6px;transform:scaleX(.89);transform-origin:100% 0;">5,700</div>
<div class="t" style="top:537.0px;font-size:20.6px;line-height:20.6px;color:#1c1c1c;left:114.2px;transform:translateX(-50%);letter-spacing:0.7px;"><span style="font-size:23px;letter-spacing:-0.6px;margin-right:0.6px">3</span>ヶ月合計</div>
<div class="t" style="top:535.6px;font-size:23px;line-height:23px;color:#222;right:979.1px;transform:scaleX(.89);transform-origin:100% 0;">8,200</div>
<div class="t" style="top:535.6px;font-size:23px;line-height:23px;color:#222;right:876.6px;transform:scaleX(.89);transform-origin:100% 0;">5,600</div>
<div class="t" style="top:535.6px;font-size:23px;line-height:23px;color:#222;right:774.1px;transform:scaleX(.89);transform-origin:100% 0;">7,100</div>
<div class="t" style="top:535.6px;font-size:23px;line-height:23px;color:#222;right:671.6px;transform:scaleX(.89);transform-origin:100% 0;">20,900</div>
<div class="t" style="top:572.2px;font-size:20.6px;line-height:20.6px;color:#1c1c1c;left:114.2px;transform:translateX(-50%);letter-spacing:0.7px;">上期合計</div>
<div class="t" style="top:570.8px;font-size:23px;line-height:23px;color:#222;right:979.1px;transform:scaleX(.89);transform-origin:100% 0;">14,900</div>
<div class="t" style="top:570.8px;font-size:23px;line-height:23px;color:#222;right:876.6px;transform:scaleX(.89);transform-origin:100% 0;">13,300</div>
<div class="t" style="top:570.8px;font-size:23px;line-height:23px;color:#222;right:774.1px;transform:scaleX(.89);transform-origin:100% 0;">12,600</div>
<div class="t" style="top:570.8px;font-size:23px;line-height:23px;color:#222;right:671.6px;transform:scaleX(.89);transform-origin:100% 0;">40,800</div>
</div>
<!-- bottom -->
<div class="ui">
<div class="r" style="left:5px;top:632px;width:1244px;height:25px;background:#e6e6e6;"></div>
<div class="r" style="left:5px;top:632px;width:1224px;height:1px;background:#ababab;"></div>
<div class="r" style="left:5px;top:657px;width:1244px;height:23px;background:#f3f3f3;"></div>
<div class="r" style="left:5px;top:656.5px;width:1244px;height:1px;background:#dcdcdc;"></div>
<div class="r" style="left:95.1px;top:635px;width:1px;height:18.5px;background:#ababab;"></div>
<div class="r" style="left:165.7px;top:635px;width:1px;height:18.5px;background:#ababab;"></div>
<div class="r" style="left:235.9px;top:635px;width:1px;height:18.5px;background:#ababab;"></div>
<div class="t" id="f49" style="top:636.5px;font-size:15.5px;line-height:15.5px;color:#505050;left:107px;transform:scaleX(0.9279);transform-origin:0 0;-webkit-text-stroke:0;">Sheet1</div>
<div class="t" id="f50" style="top:636.5px;font-size:15.5px;line-height:15.5px;color:#505050;left:177.7px;transform:scaleX(0.9279);transform-origin:0 0;-webkit-text-stroke:0;">Sheet2</div>
<div class="t" id="f51" style="top:636.5px;font-size:15.5px;line-height:15.5px;color:#505050;left:247.8px;transform:scaleX(0.9279);transform-origin:0 0;-webkit-text-stroke:0;">Sheet3</div>
<div class="r" style="left:307px;top:632px;width:69.5px;height:22.5px;background:#fff;"></div>
<div class="r" style="left:307px;top:652.6px;width:69.5px;height:1.8px;background:#217346;"></div>
<div class="r" style="left:306.5px;top:632px;width:1px;height:21px;background:#ababab;"></div>
<div class="r" style="left:376px;top:632px;width:1px;height:21px;background:#ababab;"></div>
<div class="t" id="f52" style="top:636.5px;font-size:15.5px;line-height:15.5px;color:#217346;left:318.4px;transform:scaleX(0.9483);transform-origin:0 0;-webkit-text-stroke:0;">Sheet4</div>
<div class="r" style="left:766.6px;top:637.5px;width:461px;height:15px;background:#f0f0f0;"></div>
<div class="r" style="left:781.5px;top:638px;width:392px;height:14.4px;background:#fff;box-sizing:border-box;border:1px solid #c3c3c3;"></div>
<div class="r" style="left:766.6px;top:637.5px;width:15px;height:15px;background:#fff;box-sizing:border-box;border:1px solid #c3c3c3;"></div>
<div class="r" style="left:1213.4px;top:637.8px;width:14.4px;height:14.6px;background:#fff;box-sizing:border-box;border:1px solid #c3c3c3;"></div>
<div class="r" style="left:1230.6px;top:214px;width:15.2px;height:418px;background:#f0f0f0;"></div>
<div class="r" style="left:1231px;top:230px;width:14.4px;height:388px;background:#fff;box-sizing:border-box;border:1px solid #c3c3c3;"></div>
<div class="r" style="left:1231px;top:215px;width:14.4px;height:15.2px;background:#fff;box-sizing:border-box;border:1px solid #c3c3c3;"></div>
<div class="r" style="left:1231px;top:617.5px;width:14.4px;height:14.8px;background:#fff;box-sizing:border-box;border:1px solid #c3c3c3;"></div>
<div class="t" id="f53" style="top:663.5px;font-size:12px;line-height:12px;color:#444;left:17.8px;transform:scaleX(0.9792);transform-origin:0 0;">準備完了</div>
<div class="t" id="f54" style="top:663.5px;font-size:12px;line-height:12px;color:#222;left:135.4px;transform:scaleX(0.8727);transform-origin:0 0;font-weight:bold;-webkit-text-stroke:0.15px #222;">アクセシビリティ: 検討が必要です</div>
<div class="t" id="f55" style="top:663.5px;font-size:12px;line-height:12px;color:#444;left:555px;transform:scaleX(1.0905);transform-origin:0 0;">平均: 11,333</div>
<div class="t" id="f56" style="top:663.5px;font-size:12px;line-height:12px;color:#444;left:643.8px;transform:scaleX(0.9205);transform-origin:0 0;">データの個数: 18</div>
<div class="t" id="f57" style="top:663.5px;font-size:12px;line-height:12px;color:#444;left:746px;transform:scaleX(1.0723);transform-origin:0 0;">合計: 204,000</div>
<div class="t" id="f58" style="top:663.5px;font-size:12px;line-height:12px;color:#444;left:862.7px;transform:scaleX(1.0083);transform-origin:0 0;">表示設定</div>
<div class="t" id="f59" style="top:663.5px;font-size:12px;line-height:12px;color:#444;left:1195.3px;transform:scaleX(1.0585);transform-origin:0 0;">145%</div>
<div class="r" style="left:931px;top:657.5px;width:39.2px;height:22px;background:#c9c9c9;"></div>
</div>
<svg class="ov" viewBox="0 0 1255 686">
<!-- chrome -->
<rect x="27.3" y="16.3" width="12.7" height="12.9" fill="#fff"/><rect x="29.5" y="17.6" width="8.3" height="6.5" fill="#217346"/><rect x="30.7" y="25.7" width="5.9" height="3.5" fill="#217346"/><rect x="33.1" y="26.4" width="1.1" height="2.8" fill="#fff"/>
<path d="M61.6 17.2 L56.6 21.8 L61.6 26.2 M57.2 21.8 H64.6 A3.6 3.6 0 0 1 64.6 29 H63" fill="none" stroke="#fff" stroke-width="2.3" stroke-linejoin="miter"/>
<path d="M76.65 21.25 l2.35 2.30 l2.35 -2.30" fill="none" stroke="#fff" stroke-width="1.3" stroke-linecap="round" stroke-linejoin="round"/>
<path d="M100.8 17.2 L105.8 21.8 L100.8 26.2 M105.2 21.8 H97.8 A3.6 3.6 0 0 0 97.8 29 H99.4" fill="none" stroke="#5c9c79" stroke-width="2.3"/>
<path d="M115.60 21.20 l1.90 2.00 l1.90 -2.00" fill="none" stroke="#5c9c79" stroke-width="1.2" stroke-linecap="round" stroke-linejoin="round"/>
<path d="M134.4 24.6 V16 h5.6 l3.6 3.6 V24.6 M139.8 16 v3.8 h3.8" fill="none" stroke="#fff" stroke-width="1.1"/><rect x="133" y="24.4" width="11.3" height="4" fill="#fff"/><rect x="135.9" y="25.1" width="5.5" height="2.7" rx="0.6" fill="#217346"/><circle cx="138.65" cy="26.45" r="0.8" fill="#fff"/><circle cx="134.5" cy="26.4" r="0.7" fill="#217346"/><circle cx="142.8" cy="26.4" r="0.7" fill="#217346"/><path d="M133 29.7 h11.3" stroke="#fff" stroke-width="1"/>
<rect x="159.6" y="16.6" width="14" height="12" fill="none" stroke="#fff" stroke-width="1.1"/><path d="M159.6 18.3 h14" stroke="#fff" stroke-width="1.6"/><path d="M161.6 21.7 h3 M161.6 25.3 h3" stroke="#fff" stroke-width="1"/><rect x="166.2" y="20.6" width="5.6" height="2.2" fill="none" stroke="#fff" stroke-width="0.9"/><rect x="166.2" y="24.3" width="5.6" height="2.2" fill="none" stroke="#fff" stroke-width="0.9"/>
<path d="M192 22 h4.4" stroke="#fff" stroke-width="1.1"/><path d="M192 24 h4.4 l-2.2 2.6 z" fill="#fff"/>
<path d="M684.6 58.6 C684.6 56.8 682 55.6 682 52.8 A5 5 0 0 1 692 52.8 C692 55.6 689.4 56.8 689.4 58.6 Z M684.8 60.6 h4.4 M685.4 62.6 h3.2" fill="none" stroke="#fff" stroke-width="1.1"/>
<circle cx="1041.8" cy="23.5" r="11.9" fill="#d2d0ce"/><circle cx="1041.8" cy="20.4" r="3.6" fill="none" stroke="#605e5c" stroke-width="1.1"/><path d="M1035.2 30.6 a6.6 6.6 0 0 1 13.2 0" fill="none" stroke="#605e5c" stroke-width="1.1"/>
<rect x="1081.7" y="17.4" width="12.2" height="9" fill="none" stroke="#fff" stroke-width="1.4"/><path d="M1081.7 19.8 h12.2" stroke="#fff" stroke-width="1.1"/><path d="M1087.8 25.2 v-4 M1085.4 23.2 l2.4 -2.4 l2.4 2.4" fill="none" stroke="#fff" stroke-width="1.2"/>
<path d="M1128.8 21.5 h10.2" stroke="#fff" stroke-width="1.1"/>
<rect x="1174.5" y="17.6" width="9.6" height="9" rx="1.6" fill="none" stroke="#fff" stroke-width="1.1"/>
<path d="M1220 16.9 l10 10 M1230 16.9 l-10 10" stroke="#fff" stroke-width="1.1"/>
<path d="M1180 55.2 h-4 v6 h10.4 v-2.6" fill="none" stroke="#fff" stroke-width="1"/><path d="M1178.8 59 C1179.4 55.8 1181.6 54.2 1184.4 54.2 V52 l3.6 3.3 l-3.6 3.3 V56.4 C1182 56.4 1180.2 57 1178.8 59 Z" fill="none" stroke="#fff" stroke-width="1"/>
<path d="M1226.85 54.95 l2.25 2.30 l2.25 -2.30" fill="none" stroke="#fff" stroke-width="1.1" stroke-linecap="round" stroke-linejoin="round"/>
<!-- ribbon -->
<rect x="24.7" y="82.3" width="22.3" height="24.7" rx="1.2" fill="#f0c87f"/><path d="M29.5 85.2 v-3.6 h4.4 a2.4 2.6 0 0 1 4.7 0 h4.4 v3.6 z" fill="#666"/><circle cx="36.25" cy="81.3" r="1" fill="#f3f3f3"/><path d="M40.3 93.2 h7.4 l4.2 4.2 v10.8 h-11.6 z" fill="#fff" stroke="#8a8a8a" stroke-width="1"/><path d="M47.5 93.4 v4.2 h4.2" fill="none" stroke="#8a8a8a" stroke-width="1"/>
<path d="M36.05 132.95 l2.15 2.30 l2.15 -2.30" fill="none" stroke="#444" stroke-width="1.3" stroke-linecap="round" stroke-linejoin="round"/>
<path d="M66 78.6 L72.4 88 M74 78.6 L67.6 88" stroke="#555" stroke-width="1.1" fill="none"/><circle cx="66.3" cy="89.8" r="2.5" fill="none" stroke="#4a86cf" stroke-width="1.2"/><circle cx="73.7" cy="89.8" r="2.5" fill="none" stroke="#4a86cf" stroke-width="1.2"/>
<path d="M63.9 102 h5.2 l2.6 2.6 v7.4 h-7.8 z" fill="#fff" stroke="#666" stroke-width="1"/><path d="M69.2 105.6 h5 l2.6 2.6 v7.2 h-7.6 z" fill="#fff" stroke="#666" stroke-width="1"/><path d="M65.6 105 h3 M65.6 107 h2 M65.6 109 h2 M70.8 109.4 h4.2 M70.8 111.4 h4.2 M70.8 113.4 h4.2" stroke="#3f7fc4" stroke-width="0.8"/>
<path d="M91.15 107.65 l2.15 2.30 l2.15 -2.30" fill="none" stroke="#444" stroke-width="1.3" stroke-linecap="round" stroke-linejoin="round"/>
<path d="M64 131.6 l6.2 -3 l3.6 5.4 l-5.4 3.4 z" fill="#eab65c"/><path d="M70.6 128.4 l3.6 -2 l2.6 4 l-3.4 2.2 z" fill="#555"/><path d="M75 126.6 l2.4 -1.2" stroke="#555" stroke-width="1.6"/>
<path d="M102.3 159.6 V153.4 H108.8" fill="none" stroke="#666" stroke-width="1"/><path d="M105.3 156.4 L109.7 160.6 M109.89999999999999 157.0 V160.8 H106.1" fill="none" stroke="#666" stroke-width="1"/>
<path d="M282 92.2 h5 l-2.5 2.8 z" fill="#555"/>
<path d="M323.5 92.2 h5 l-2.5 2.8 z" fill="#555"/>
<path d="M350 88.4 l1.8 -1.8 l1.8 1.8 z" fill="#3f7fc4"/>
<path d="M373.4 87.2 l1.8 1.8 l1.8 -1.8 z" fill="#3f7fc4"/>
<path d="M196.65 123.45 l2.25 2.30 l2.25 -2.30" fill="none" stroke="#444" stroke-width="1.3" stroke-linecap="round" stroke-linejoin="round"/>
<rect x="219.2" y="117.9" width="13" height="12.6" fill="none" stroke="#666" stroke-width="1"/><path d="M225.7 117.9 v12.6 M219.2 124.2 h13" stroke="#666" stroke-width="1"/>
<path d="M241.65 123.45 l2.25 2.30 l2.25 -2.30" fill="none" stroke="#444" stroke-width="1.3" stroke-linecap="round" stroke-linejoin="round"/>
<path d="M265.2 123.6 l5.3 -5 l5.2 4 l-5.2 5.4 z" fill="#fff" stroke="#555" stroke-width="1"/><circle cx="270.3" cy="118" r="1.5" fill="#f3f3f3" stroke="#555" stroke-width="0.9"/><path d="M274.4 120.6 q3.6 1 3.4 5.2 q-1.6 -2.6 -4 -2.6 z" fill="#3f7fc4"/>
<path d="M286.25 123.45 l2.25 2.30 l2.25 -2.30" fill="none" stroke="#444" stroke-width="1.3" stroke-linecap="round" stroke-linejoin="round"/>
<path d="M325.65 123.45 l2.25 2.30 l2.25 -2.30" fill="none" stroke="#444" stroke-width="1.3" stroke-linecap="round" stroke-linejoin="round"/>
<path d="M370.45 123.45 l2.25 2.30 l2.25 -2.30" fill="none" stroke="#444" stroke-width="1.3" stroke-linecap="round" stroke-linejoin="round"/>
<path d="M377.3 159.6 V153.4 H383.8" fill="none" stroke="#666" stroke-width="1"/><path d="M380.3 156.4 L384.7 160.6 M384.90000000000003 157.0 V160.8 H381.1" fill="none" stroke="#666" stroke-width="1"/>
<path d="M401.2 86.1 H415.7" stroke="#5a5a5a" stroke-width="1"/><path d="M403.1 88.7 H414.2" stroke="#5a5a5a" stroke-width="1"/><path d="M401.2 91.3 H415.7" stroke="#5a5a5a" stroke-width="1"/>
<path d="M425 89.2 H440" stroke="#5a5a5a" stroke-width="1"/><path d="M427.1 91.8 H438" stroke="#5a5a5a" stroke-width="1"/><path d="M425 94.4 H440" stroke="#5a5a5a" stroke-width="1"/><path d="M427.1 97 H438" stroke="#5a5a5a" stroke-width="1"/>
<path d="M449.4 92.5 H463.9" stroke="#5a5a5a" stroke-width="1"/><path d="M451.5 95.1 H461.8" stroke="#5a5a5a" stroke-width="1"/><path d="M449.4 97.6 H463.9" stroke="#5a5a5a" stroke-width="1"/><path d="M451.5 100.1 H461.8" stroke="#5a5a5a" stroke-width="1"/>
<g transform="rotate(-50 478.8 91.6)"><text x="473.4" y="94.6" font-family="Liberation Sans, sans-serif" font-size="10.5" fill="#333" stroke="#333" stroke-width="0.15">ab</text></g><path d="M479.8 99.4 L488.2 91.4" fill="none" stroke="#444" stroke-width="1.1"/><path d="M489.4 90.2 l-3.6 0.6 l3 3 z" fill="#444"/>
<path d="M494.65 92.25 l2.25 2.30 l2.25 -2.30" fill="none" stroke="#444" stroke-width="1.3" stroke-linecap="round" stroke-linejoin="round"/>
<path d="M542.8 93.2 v3.6 h-5.6 M539.4 94.6 l-2.4 2.2 l2.4 2.2" fill="none" stroke="#3f7fc4" stroke-width="1.2"/>
<path d="M402.6 120.3 H413.8" stroke="#5a5a5a" stroke-width="1"/><path d="M402.6 123.1 H411" stroke="#5a5a5a" stroke-width="1"/><path d="M402.6 125.8 H413.8" stroke="#5a5a5a" stroke-width="1"/><path d="M402.6 128.6 H411" stroke="#5a5a5a" stroke-width="1"/>
<path d="M425.9 120.3 H439" stroke="#5a5a5a" stroke-width="1"/><path d="M428 123.1 H437" stroke="#5a5a5a" stroke-width="1"/><path d="M425.9 125.8 H439" stroke="#5a5a5a" stroke-width="1"/><path d="M428 128.6 H437" stroke="#5a5a5a" stroke-width="1"/>
<path d="M450.9 120.3 H462.5" stroke="#5a5a5a" stroke-width="1"/><path d="M454 123.1 H462.5" stroke="#5a5a5a" stroke-width="1"/><path d="M450.9 125.8 H462.5" stroke="#5a5a5a" stroke-width="1"/><path d="M454 128.6 H462.5" stroke="#5a5a5a" stroke-width="1"/>
<path d="M474.2 118.4 h14.5 M474.2 130.6 h14.5 M481.5 120.8 h7.2 M481.5 123.3 h7.2 M481.5 125.9 h7.2 M481.5 128.3 h7.2" stroke="#5a5a5a" stroke-width="1"/><path d="M480.4 124.6 h-5.4 M477.4 121.6 l-3 3 l3 3" fill="none" stroke="#3f7fc4" stroke-width="1.7"/>
<path d="M498 118.4 h14.6 M498 130.6 h14.6 M505.4 120.8 h7.2 M505.4 123.3 h7.2 M505.4 125.9 h7.2 M505.4 128.3 h7.2" stroke="#5a5a5a" stroke-width="1"/><path d="M498.2 124.6 h5.4 M501.2 121.6 l3 3 l-3 3" fill="none" stroke="#3f7fc4" stroke-width="1.7"/>
<rect x="528.7" y="116.5" width="15" height="14.8" fill="#fff" stroke="#777" stroke-width="1"/><path d="M528.7 120.4 h15 M528.7 127.4 h15 M536.2 116.5 v3.9 M536.2 127.4 v3.9" stroke="#777" stroke-width="0.9"/><path d="M531 123.9 h10.4 M533 122 l-2 1.9 l2 1.9 M539.4 122 l2 1.9 l-2 1.9" fill="none" stroke="#3f7fc4" stroke-width="1.1"/>
<path d="M556.65 123.45 l2.25 2.30 l2.25 -2.30" fill="none" stroke="#444" stroke-width="1.3" stroke-linecap="round" stroke-linejoin="round"/>
<path d="M567.9 159.6 V153.4 H574.4" fill="none" stroke="#666" stroke-width="1"/><path d="M570.9 156.4 L575.3 160.6 M575.5 157.0 V160.8 H571.6999999999999" fill="none" stroke="#666" stroke-width="1"/>
<path d="M664 84.2 h5 l-2.5 2.8 z" fill="#555"/>
<rect x="591.2" y="101.2" width="14.6" height="8.6" rx="0.8" fill="#3a6db5"/><ellipse cx="598.4" cy="105.4" rx="3.4" ry="2.5" fill="#f3f3f3"/><circle cx="598.6" cy="105.4" r="1.2" fill="#3a6db5"/><rect x="596.6" y="110.2" width="5.4" height="2" fill="#f0c87f"/><rect x="596.6" y="112.8" width="5.4" height="2" fill="#f0c87f"/><rect x="596.6" y="115" width="5.4" height="1.6" fill="#f0c87f"/><rect x="602.4" y="107.4" width="4.4" height="2" fill="#f0c87f"/><rect x="602.4" y="110" width="4.4" height="2" fill="#f0c87f"/><rect x="602.4" y="112.6" width="4.4" height="2" fill="#f0c87f"/>
<path d="M614.45 107.65 l2.25 2.30 l2.25 -2.30" fill="none" stroke="#444" stroke-width="1.3" stroke-linecap="round" stroke-linejoin="round"/>
<path d="M593.6 128.6 h4.4 M595.4 126.8 l-1.8 1.8 l1.8 1.8" fill="none" stroke="#3f7fc4" stroke-width="1.2"/>
<path d="M616.4 135.4 h4.4 M619 133.6 l1.8 1.8 l-1.8 1.8" fill="none" stroke="#3f7fc4" stroke-width="1.2"/>
<path d="M669.3 159.6 V153.4 H675.8" fill="none" stroke="#666" stroke-width="1"/><path d="M672.3 156.4 L676.6999999999999 160.6 M676.9 157.0 V160.8 H673.0999999999999" fill="none" stroke="#666" stroke-width="1"/>
<path d="M659.6 107 a2 2 0 1 1 4 0 q0 2.8 -3.2 4.4 l-0.5 -0.7 q1.8 -1 1.7 -1.9 a2 2 0 0 1 -2 -1.8 z" fill="#444"/>
<rect x="694" y="78.9" width="12.6" height="11" fill="#fff" stroke="#777" stroke-width="0.9"/><path d="M698.2 78.9 v11 M702.4 78.9 v11 M694 82.6 h12.6 M694 86.2 h12.6" stroke="#777" stroke-width="0.8"/><rect x="694.5" y="79.4" width="3.4" height="2.9" fill="#d04a32"/><rect x="694.5" y="83" width="3.4" height="2.9" fill="#3f7fc4"/><rect x="694.5" y="86.6" width="3.4" height="2.9" fill="#d04a32"/><rect x="700.6" y="86.4" width="8" height="6.4" fill="#fff" stroke="#555" stroke-width="0.9"/><path d="M702.4 90.6 h4.4 M702.4 88.6 h2.2" stroke="#555" stroke-width="0.8"/>
<rect x="694" y="103.5" width="12.6" height="9.6" fill="#fff" stroke="#777" stroke-width="0.9"/><path d="M698.2 103.5 v9.6 M702.4 103.5 v9.6 M694 106.7 h12.6 M694 109.9 h12.6" stroke="#777" stroke-width="0.8"/><path d="M701.4 112.4 l6.4 -7.8 l2 1.7 l-6.4 7.8 z" fill="#555"/><path d="M697.6 116.6 l3.4 -4 l2.4 2 l-1.6 2 z" fill="#3f7fc4"/>
<rect x="694" y="124.5" width="12.6" height="9.6" fill="#fff" stroke="#777" stroke-width="0.9"/><path d="M698.2 124.5 v9.6 M702.4 124.5 v9.6 M694 127.7 h12.6 M694 130.9 h12.6" stroke="#777" stroke-width="0.8"/><rect x="698.6" y="128.1" width="7.6" height="5.6" fill="#a9c6e8"/><path d="M701.4 134.4 l6.4 -7.8 l2 1.7 l-6.4 7.8 z" fill="#555"/><path d="M697.6 138.6 l3.4 -4 l2.4 2 l-1.6 2 z" fill="#3f7fc4"/>
<path d="M786.15 85.05 l2.15 2.30 l2.15 -2.30" fill="none" stroke="#444" stroke-width="1.3" stroke-linecap="round" stroke-linejoin="round"/>
<path d="M827.65 108.35 l2.15 2.30 l2.15 -2.30" fill="none" stroke="#444" stroke-width="1.3" stroke-linecap="round" stroke-linejoin="round"/>
<path d="M781.35 131.65 l2.15 2.30 l2.15 -2.30" fill="none" stroke="#444" stroke-width="1.3" stroke-linecap="round" stroke-linejoin="round"/>
<path d="M862.6 78.6 h7.6 v2.8 h-7.6 z M866.4 78.6 v2.8 M862.6 87.8 h7.6 v4.8 h-7.6 z M866.4 87.8 v4.8 M862.6 90.2 h7.6" fill="none" stroke="#777" stroke-width="0.9"/><rect x="868.8" y="83" width="7.6" height="3.2" fill="#fff" stroke="#3f7fc4" stroke-width="0.9"/><path d="M868.4 84.6 h-5.6 M865 82.6 l-2.2 2 l2.2 2" fill="none" stroke="#3f7fc4" stroke-width="1.2"/>
<path d="M862.6 102.2 h8 v3 h-8 z M862.6 112 h8 v3.4 h-8 z M866.6 102.2 v3 M866.6 112 v3.4 M862.6 113.7 h8 M864.6 107 h4 v3 h-4 z" fill="none" stroke="#777" stroke-width="0.9"/><path d="M870.4 104.6 l6 6 M876.4 104.6 l-6 6" stroke="#d9442e" stroke-width="1.5"/>
<path d="M863 124.6 v2 M866.4 124.6 v2 M869.8 124.6 v2 M873.2 124.6 v2 M862.6 125.4 h11.6" stroke="#3f7fc4" stroke-width="0.9"/><rect x="862.6" y="127.6" width="13.6" height="9.4" fill="#fff" stroke="#777" stroke-width="0.9"/><path d="M866 127.6 v9.4 M872.8 127.6 v9.4 M862.6 134.4 h13.6" stroke="#777" stroke-width="0.8"/><rect x="867.2" y="129.4" width="4.4" height="4" fill="#3f7fc4"/><path d="M866 137 q1 2.4 3 1.6 q1.4 -0.8 3.8 -1.6" fill="none" stroke="#777" stroke-width="0.9"/>
<path d="M921.95 84.25 l2.25 2.30 l2.25 -2.30" fill="none" stroke="#444" stroke-width="1.3" stroke-linecap="round" stroke-linejoin="round"/>
<path d="M921.95 107.65 l2.25 2.30 l2.25 -2.30" fill="none" stroke="#444" stroke-width="1.3" stroke-linecap="round" stroke-linejoin="round"/>
<path d="M910.15 131.65 l2.15 2.30 l2.15 -2.30" fill="none" stroke="#444" stroke-width="1.3" stroke-linecap="round" stroke-linejoin="round"/>
<path d="M984.45 84.25 l2.25 2.30 l2.25 -2.30" fill="none" stroke="#444" stroke-width="1.3" stroke-linecap="round" stroke-linejoin="round"/>
<path d="M1009.6 81.4 h7.2 l-2.8 3.2 v3.6 l-1.6 -1 v-2.6 z" fill="#555"/><path d="M1008.2 79.4 v11 M1006.8 89 l1.4 1.6 l1.4 -1.6" fill="none" stroke="#777" stroke-width="0.7"/>
<path d="M1023.55 84.25 l2.25 2.30 l2.25 -2.30" fill="none" stroke="#444" stroke-width="1.3" stroke-linecap="round" stroke-linejoin="round"/>
<rect x="957.2" y="102.2" width="13" height="13.2" fill="#fff" stroke="#666" stroke-width="1"/><path d="M956.7 101.8 h14" stroke="#555" stroke-width="1.6"/><path d="M963.7 104.8 v7.6 M960.5 109.3 l3.2 3.3 l3.2 -3.3" fill="none" stroke="#3a78c2" stroke-width="1.9"/>
<path d="M977.35 107.65 l2.25 2.30 l2.25 -2.30" fill="none" stroke="#444" stroke-width="1.3" stroke-linecap="round" stroke-linejoin="round"/>
<circle cx="1012.6" cy="106.4" r="4.6" fill="none" stroke="#3f7fc4" stroke-width="1.5"/><path d="M1009.2 110 l-5.2 5.2" stroke="#3f7fc4" stroke-width="1.7" stroke-linecap="round"/>
<path d="M1023.55 107.65 l2.25 2.30 l2.25 -2.30" fill="none" stroke="#444" stroke-width="1.3" stroke-linecap="round" stroke-linejoin="round"/>
<path d="M957.4 133.6 l8 -7.6 l5 4.6 l-8 7.4 h-2.2 z" fill="#e8849a"/><path d="M960.6 130.6 l5 4.6" stroke="#f3f3f3" stroke-width="1"/>
<path d="M977.35 131.25 l2.25 2.30 l2.25 -2.30" fill="none" stroke="#444" stroke-width="1.3" stroke-linecap="round" stroke-linejoin="round"/>
<circle cx="1071.8" cy="92.2" r="5" fill="#ff8c00"/>
<path d="M1151 104 h-9.6 a2 2 0 0 1 -2 -2 v-18.6 a2 2 0 0 1 2 -2 h11.4 l5.6 5.6 v8.4" fill="none" stroke="#4472c4" stroke-width="1.3"/><path d="M1144.4 95.2 q3.4 -4 4.6 -9.6 q0.2 -1.4 -0.6 -1.4 q-1 0.2 -0.2 3 q1.4 4.6 5.6 7 q1.8 0.8 2 -0.2 q0 -1 -2.6 -0.8 q-4.4 0.4 -8.8 2 z" fill="none" stroke="#4472c4" stroke-width="1"/><g fill="none" stroke="#4472c4" stroke-width="1.5"><rect x="1155.4" y="95.6" width="9" height="5.4" rx="2.7" transform="rotate(-45 1159.9 98.3)"/><rect x="1149.6" y="101.6" width="9" height="5.4" rx="2.7" transform="rotate(-45 1154.1 104.3)"/></g>
<path d="M1230.4 160.4 l4.5 -4.6 l4.5 4.6" fill="none" stroke="#444" stroke-width="1.2"/>
<!-- formula -->
<path d="M115.5 187.8 h6 l-3.0 3.2 z" fill="#666"/>
<rect x="140.8" y="183.6" width="2.2" height="2" fill="#aaa"/>
<rect x="140.8" y="187.8" width="2.2" height="2" fill="#aaa"/>
<rect x="140.8" y="192" width="2.2" height="2" fill="#aaa"/>
<path d="M169.5 184.5 l11 10 M180.5 184.5 l-11 10" stroke="#b5b5b5" stroke-width="1.3" fill="none"/>
<path d="M205.2 190.4 l4 4.2 l8.6 -9.6" stroke="#b5b5b5" stroke-width="1.4" fill="none"/>
<path d="M1232.70 187.50 l2.30 2.40 l2.30 -2.40" fill="none" stroke="#555" stroke-width="1.4" stroke-linecap="round" stroke-linejoin="round"/>
<!-- grid -->
<path d="M46 218 V245 H17 Z" fill="#b7b7b7"/>
<!-- bottom -->
<path d="M34 641.8 v6.6 l-4 -3.3 z" fill="#c4c4c4"/><path d="M55.6 641.8 v6.6 l4 -3.3 z" fill="#c4c4c4"/>
<circle cx="415.5" cy="645.6" r="8" fill="none" stroke="#666" stroke-width="1.1"/><path d="M411.3 645.6 h8.4 M415.5 641.4 v8.4" stroke="#666" stroke-width="1.2"/>
<rect x="750.6" y="640" width="2.2" height="2" fill="#b5b5b5"/>
<rect x="750.6" y="644" width="2.2" height="2" fill="#b5b5b5"/>
<rect x="750.6" y="648" width="2.2" height="2" fill="#b5b5b5"/>
<path d="M776 641.5 v7 l-3.8 -3.5 z" fill="#000"/>
<path d="M1218.8 641.5 v7 l3.8 -3.5 z" fill="#000"/>
<path d="M1234.8 624.2 h7 l-3.5 3.8 z" fill="#000"/>
<path d="M1234.8 224.6 h7 l-3.5 -3.8 z" fill="#000"/>
<rect x="87.2" y="664" width="11.4" height="10.2" rx="1" fill="#7d7d7d"/><circle cx="89.4" cy="664.6" r="2.3" fill="#5a5a5a"/><rect x="92.6" y="664.8" width="5.2" height="1.6" fill="#e8e8e8"/><rect x="89.2" y="668" width="1.5" height="1.3" fill="#ececec"/><rect x="89.2" y="670.4" width="1.5" height="1.3" fill="#ececec"/><rect x="89.2" y="672.6" width="1.5" height="1.3" fill="#ececec"/><rect x="92.2" y="668" width="1.5" height="1.3" fill="#ececec"/><rect x="92.2" y="670.4" width="1.5" height="1.3" fill="#ececec"/><rect x="92.2" y="672.6" width="1.5" height="1.3" fill="#ececec"/><rect x="95.2" y="668" width="1.5" height="1.3" fill="#ececec"/><rect x="95.2" y="670.4" width="1.5" height="1.3" fill="#ececec"/><rect x="95.2" y="672.6" width="1.5" height="1.3" fill="#ececec"/>
<path d="M124.6 663.6 a5.7 5.7 0 1 0 0.6 11.2" fill="none" stroke="#666" stroke-width="1" stroke-dasharray="2.4 1.5"/><path d="M121.4 667.4 h5.6 M124.2 665.2 v3.6 l-1.8 2.6 M124.2 668.8 l1.6 1.6" fill="none" stroke="#555" stroke-width="1"/><path d="M125.6 669.2 l6.8 6.8 M132.4 669.2 l-6.8 6.8" stroke="#1e1e1e" stroke-width="1.7"/>
<rect x="845.6" y="662" width="14.8" height="9.8" rx="0.8" fill="#4a4a4a"/><path d="M848.6 673.6 h4.4" stroke="#4a4a4a" stroke-width="1.3"/><circle cx="856" cy="672.6" r="3.9" fill="#f3f3f3"/><circle cx="856" cy="672.6" r="2.6" fill="none" stroke="#2c2c2c" stroke-width="1.9" stroke-dasharray="1.35 0.7"/><circle cx="856" cy="672.6" r="1.9" fill="#2c2c2c"/><circle cx="856" cy="672.6" r="0.9" fill="#f3f3f3"/>
<rect x="944.8" y="663.8" width="11.4" height="10.4" fill="none" stroke="#555" stroke-width="1"/><path d="M948.6 663.8 v10.4 M952.4 663.8 v10.4 M944.8 667.3 h11.4 M944.8 670.8 h11.4" stroke="#555" stroke-width="0.9"/>
<rect x="983.9" y="663.8" width="12.4" height="10.4" fill="none" stroke="#666" stroke-width="1"/><rect x="986.6" y="666" width="7" height="6.2" fill="none" stroke="#666" stroke-width="0.9"/><path d="M988 668 h4.2 M988 670 h4.2" stroke="#666" stroke-width="0.8"/>
<rect x="1023.7" y="663.8" width="12.4" height="10.4" fill="none" stroke="#666" stroke-width="1"/><path d="M1023.7 669 h12.4 M1027.9 663.8 v5.2 M1032 663.8 v5.2" fill="none" stroke="#666" stroke-width="0.9"/>
<path d="M1056.6 669 h7" stroke="#555" stroke-width="1.1"/>
<path d="M1069.4 669 h99.6" stroke="#666" stroke-width="1"/>
<path d="M1118.8 665.6 v6.8" stroke="#666" stroke-width="1"/>
<rect x="1123.8" y="662.8" width="4.8" height="12" fill="#444"/>
<path d="M1173.8 669 h7.4 M1177.5 665.3 v7.4" stroke="#555" stroke-width="1.1"/>
</svg>
<div id="frame"></div>
<!-- annotation -->
<div class="r" style="left:671px;top:541.5px;width:562px;height:64px;box-sizing:border-box;border:4.2px solid #fa0505;background:#fff"></div>
<div class="t" id="f60" style="top:554.2px;font-size:32px;line-height:32px;color:#fa0505;left:695.2px;transform:scaleX(0.9868);transform-origin:0 0;font-weight:bold;letter-spacing:2.8px;-webkit-text-stroke:1.2px #fa0505;">数式が入ったセルだけ選択される</div>
<svg class="ov" viewBox="0 0 1255 686">
<clipPath id="selclip"><path d="M176.3 386.7 L480.6 386.7 L480.6 280.8 L590.8 280.8 L590.8 602.2 L176.3 602.2 L176.3 528 L485.3 528 L485.3 426.2 L176.3 426.2 Z"/></clipPath>
<path d="M176.3 386.7 L480.6 386.7 L480.6 280.8 L590.8 280.8 L590.8 602.2 L176.3 602.2 L176.3 528 L485.3 528 L485.3 426.2 L176.3 426.2 Z" fill="none" stroke="#f7ecec" stroke-width="8.6" stroke-linejoin="miter" clip-path="url(#selclip)"/>
<path d="M176.3 386.7 L480.6 386.7 L480.6 280.8 L590.8 280.8 L590.8 602.2 L176.3 602.2 L176.3 528 L485.3 528 L485.3 426.2 L176.3 426.2 Z" fill="none" stroke="#fa0505" stroke-width="4" stroke-linejoin="miter"/>
<path d="M583.2 479.7 L670.5 572.5" stroke="#fa0505" stroke-width="2"/>
<circle cx="583.2" cy="479.7" r="3.5" fill="#fa0505"/>
</svg>
</div>
</body>
</html>
